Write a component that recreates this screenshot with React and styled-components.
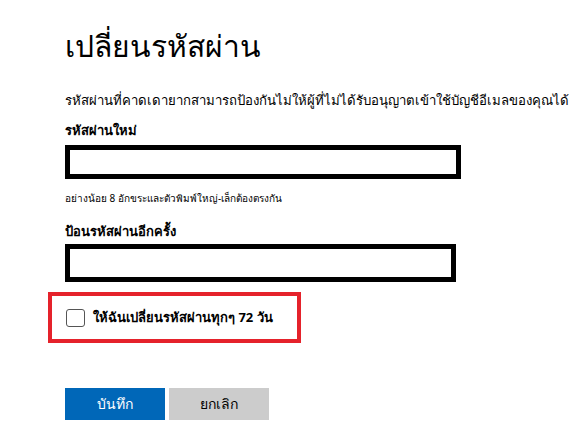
import styled, { createGlobalStyle } from "styled-components";

const Global = createGlobalStyle`
  body {
    margin: 0;
    background: #fff;
    font-family: "Noto Sans", "Liberation Sans", sans-serif;
    color: #000;
  }
`;

const App = () => {
  return (
    <Page>
      <Global />
      <Title>เปลี่ยนรหัสผ่าน</Title>
      <Desc>รหัสผ่านที่คาดเดายากสามารถป้องกันไม่ให้ผู้ที่ไม่ได้รับอนุญาตเข้าใช้บัญชีอีเมลของคุณได้</Desc>
      <Label $top={10}>รหัสผ่านใหม่</Label>
      <Input type="password" $w={396} $h={34} $top={5} />
      <Hint>อย่างน้อย 8 อักขระและตัวพิมพ์ใหญ่-เล็กต้องตรงกัน</Hint>
      <Label $top={16}>ป้อนรหัสผ่านอีกครั้ง</Label>
      <Input type="password" $w={391} $h={38} $top={3} />
      <Highlight>
        <Check type="checkbox" />
        <CheckText>ให้ฉันเปลี่ยนรหัสผ่านทุกๆ 72 วัน</CheckText>
      </Highlight>
      <Buttons>
        <Button $primary>บันทึก</Button>
        <Button>ยกเลิก</Button>
      </Buttons>
    </Page>
  );
};

export default App;

const Page = styled.div`
  width: 586px;
  height: 421px;
  box-sizing: border-box;
  padding: 26px 0 0 65px;
  display: flex;
  flex-direction: column;
  align-items: flex-start;
  overflow: hidden;
`;

const Title = styled.h1`
  margin: 0;
  font-size: 30px;
  font-weight: 400;
  line-height: 40px;
`;

const Desc = styled.p`
  margin: 24px 0 0 0;
  font-size: 13.2px;
  line-height: 20px;
  white-space: nowrap;
`;

const Label = styled.div`
  margin-top: ${(p) => p.$top}px;
  font-size: 13px;
  font-weight: 700;
  line-height: 20px;
`;

const Input = styled.input`
  box-sizing: border-box;
  width: ${(p) => p.$w}px;
  height: ${(p) => p.$h}px;
  margin: ${(p) => p.$top}px 0 0 0;
  border: 5px solid #000;
  background: #fff;
  outline: none;
  padding: 0 8px;
`;

const Hint = styled.div`
  margin-top: 12px;
  font-size: 10px;
  line-height: 14px;
`;

const Highlight = styled.div`
  margin: 10px 0 0 -17px;
  width: 253px;
  height: 51px;
  box-sizing: border-box;
  border: 4px solid #e5222b;
  display: flex;
  align-items: center;
  gap: 8px;
  padding-left: 14px;
`;

const Check = styled.input`
  appearance: none;
  margin: 0;
  width: 19px;
  height: 18px;
  border: 1px solid #555;
  border-radius: 3px;
  background: #fff;
`;

const CheckText = styled.span`
  font-size: 13px;
  font-weight: 700;
`;

const Buttons = styled.div`
  margin-top: 45px;
  display: flex;
  gap: 4px;
`;

const Button = styled.button`
  width: 100px;
  height: 32px;
  border: none;
  font-family: inherit;
  font-size: 14px;
  background: ${(p) => (p.$primary ? "#0067b8" : "#cccccc")};
  color: ${(p) => (p.$primary ? "#fff" : "#000")};
`;
